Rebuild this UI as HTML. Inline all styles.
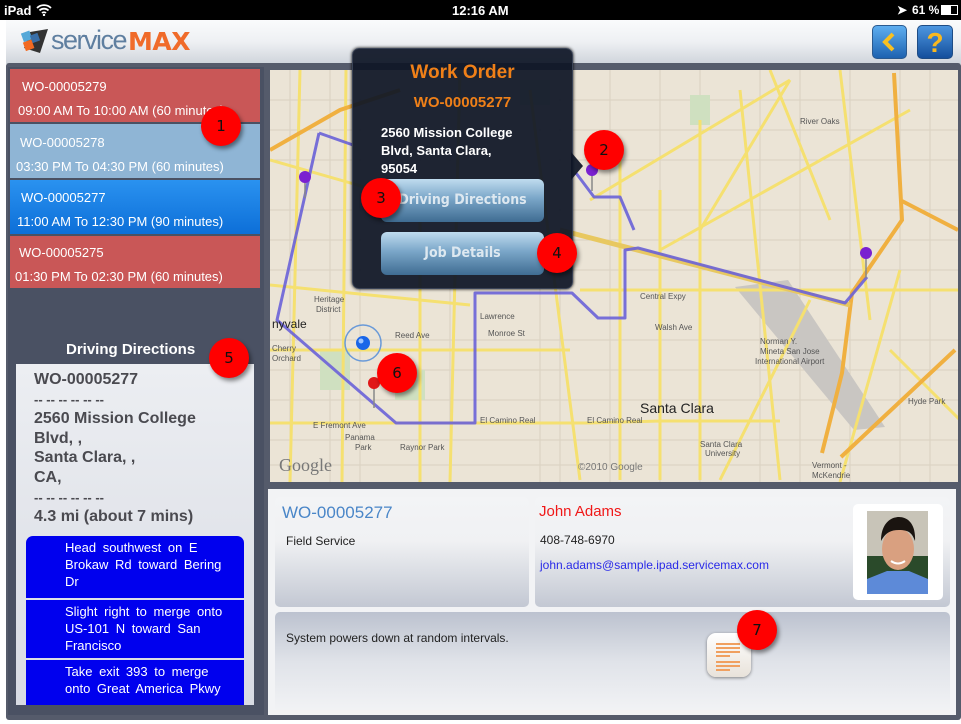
<!DOCTYPE html>
<html><head><meta charset="utf-8"><style>
*{margin:0;padding:0;box-sizing:border-box}
body{width:961px;height:724px;position:relative;overflow:hidden;background:#fff;font-family:"Liberation Sans",sans-serif}
.a{position:absolute}
.sb{left:0;top:0;width:961px;height:20px;background:#000;color:#fff;font-size:13px;font-weight:bold}
.hdr{left:6px;top:20px;width:955px;height:44px;background:linear-gradient(#fafbfc,#eef0f3 50%,#cfd4db)}
.frame{left:6px;top:63px;width:955px;height:657px;background:#555b6b;border-radius:3px}
.item{left:10px;width:250px;color:#fff;font-size:13px}
.item div{position:absolute;white-space:nowrap}
.rc{width:40px;height:40px;border-radius:50%;background:#f00;color:#111;font-size:15px;text-align:center;line-height:40px;box-shadow:2px 3px 4px rgba(0,0,0,.45);font-family:"DejaVu Sans",sans-serif}
.blue{left:26px;width:218px;background:#0000ee;color:#fff;font-size:13px;line-height:17px;padding:3px 14px 0 39px;word-spacing:3px}
.card{background:linear-gradient(#f3f4f6,#f0f1f3 40%,#c3c8d3);border-radius:5px}
.btn{left:381px;width:163px;height:43px;border-radius:6px;background:linear-gradient(#c0dcef,#7aa6c8 45%,#3f6c92);color:#dde8f0;font-weight:bold;font-size:14px;text-align:center;line-height:43px;font-family:"DejaVu Sans Condensed","DejaVu Sans",sans-serif}
</style></head><body>
<div class="a sb"><span class="a" style="left:4px;top:3px">iPad</span>
<svg class="a" style="left:36px;top:4px" width="16" height="12" viewBox="0 0 16 12"><path d="M1 4a10 10 0 0 1 14 0M3.5 6.5a6.5 6.5 0 0 1 9 0M6 9a3 3 0 0 1 4 0" stroke="#fff" stroke-width="1.8" fill="none"/><circle cx="8" cy="11" r="1.2" fill="#fff"/></svg>
<span class="a" style="left:452px;top:3px">12:16 AM</span>
<span class="a" style="left:897px;top:3px;font-size:12px">➤</span>
<span class="a" style="left:912px;top:3px;font-size:12px">61 %</span>
<div class="a" style="left:941px;top:5px;width:17px;height:10px;border:1px solid #fff"><div style="width:9px;height:8px;background:#fff"></div></div></div>
<div class="a hdr"></div>
<svg class="a" style="left:20px;top:27px" width="32" height="28" viewBox="0 0 32 28"><path d="M10 5l18-3-8 24-16-5z" fill="#333"/><rect x="2" y="5" width="9" height="9" transform="rotate(-20 6 9)" fill="#55a8d8"/><rect x="11" y="7" width="8" height="8" transform="rotate(-20 15 11)" fill="#3a6fa8"/><rect x="4" y="14" width="9" height="9" transform="rotate(-20 8 18)" fill="#f26a22"/></svg>
<div class="a" style="left:51px;top:25px;font-size:27px;color:#5f7fa0;letter-spacing:-1.5px">service</div>
<div class="a" style="left:128px;top:27px;font-size:25px;font-weight:bold;color:#f06b2a;letter-spacing:-0.5px;font-family:'DejaVu Sans',sans-serif">MAX</div>
<div class="a" style="left:872px;top:25px;width:35px;height:34px;border-radius:5px;background:linear-gradient(#5eaef0,#1d62b0);border:1px solid #2a5a90"><svg width="33" height="32"><path d="M20 8l-8 8 8 8" stroke="#f8c020" stroke-width="4" fill="none"/></svg></div>
<div class="a" style="left:917px;top:25px;width:36px;height:34px;border-radius:5px;background:linear-gradient(#4d96e0,#144f9c);border:1px solid #1e4c85;color:#f8b820;font-size:28px;font-weight:bold;text-align:center;line-height:33px">?</div>
<div class="a frame"></div>
<div class="a" style="left:8px;top:67px;width:256px;height:648px;background:#4a5163"></div>
<div class="a item" style="top:69px;height:53px;background:#c95757"><div style="left:12px;top:10px">WO-00005279</div><div style="left:8px;top:34px">09:00 AM To 10:00 AM (60 minutes)</div></div>
<div class="a item" style="top:124px;height:54px;background:#8fb5d5"><div style="left:10px;top:11px">WO-00005278</div><div style="left:6px;top:35px">03:30 PM To 04:30 PM (60 minutes)</div></div>
<div class="a item" style="top:180px;height:54px;background:linear-gradient(#2a92f0,#0d6fd8)"><div style="left:11px;top:10px">WO-00005277</div><div style="left:7px;top:34px">11:00 AM To 12:30 PM (90 minutes)</div></div>
<div class="a item" style="top:236px;height:52px;background:#c95757"><div style="left:9px;top:9px">WO-00005275</div><div style="left:5px;top:33px">01:30 PM To 02:30 PM (60 minutes)</div></div>
<div class="a" style="left:66px;top:341px;color:#fff;font-weight:bold;font-size:15px">Driving Directions</div>
<div class="a" style="left:16px;top:364px;width:238px;height:341px;background:linear-gradient(#eceef2,#d8dbe3)"></div>
<div class="a" style="left:34px;top:370px;color:#4a4a50;font-weight:bold;font-size:16px;line-height:19.6px">WO-00005277<br><span style="font-size:13px">-- -- -- -- -- --</span><br>2560 Mission College<br>Blvd, ,<br>Santa Clara, ,<br>CA,<br><span style="font-size:13px">-- -- -- -- -- --</span><br>4.3 mi (about 7 mins)</div>
<div class="a blue" style="top:536px;height:62px;border-radius:7px 7px 0 0">Head southwest on E Brokaw Rd toward Bering Dr</div>
<div class="a blue" style="top:600px;height:58px">Slight right to merge onto US-101 N toward San Francisco</div>
<div class="a blue" style="top:660px;height:45px">Take exit 393 to merge onto Great America Pkwy</div>
<!-- map -->
<svg class="a" style="left:270px;top:70px" width="688" height="412" viewBox="270 70 688 412" font-family="Liberation Sans" font-size="8" fill="#555">
<rect x="270" y="70" width="688" height="412" fill="#ebe4d6"/>
<g stroke="#d9d1c0" stroke-width="1" fill="none">
<path d="M290 70v412M330 70v412M360 70v412M420 70v412M450 70v412M540 70v412M560 70v412M610 70v412M660 70v412M700 70v412M760 70v412M800 70v412M850 70v412M900 70v412M930 70v412"/>
<path d="M270 100h688M270 130h688M270 160h688M270 210h688M270 240h688M270 270h688M270 340h688M270 370h688M270 400h688M270 440h688M270 465h688"/>
</g>
<g fill="#cfe0c0"><rect x="320" y="350" width="30" height="40"/><rect x="395" y="370" width="30" height="30"/><rect x="690" y="95" width="20" height="30"/><rect x="520" y="80" width="30" height="25"/></g>
<path d="M735 287l53-7 97 147-31 3z" fill="#c9c6c2"/>
<g stroke="#f5e070" stroke-width="3" fill="none">
<path d="M270 285l200 20M270 350h300M270 423h320l70-2h120M300 70l-10 412M346 70l-4 412M420 200v282M460 70l-10 412M530 90l50 390M620 140v340M660 190v290M700 120v360M740 90l40 390M580 290h380M270 160l140 40M590 200l200-120M660 250l250-140M700 230l90-150M770 70l60 150M840 70l30 250M810 300l-90 180M900 270l-60 212M890 350l70 70"/>
</g>
<g stroke="#f0b040" stroke-width="4" fill="none">
<path d="M270 150l70-40 60-20M894 73l8 147-50 73-10 80-20 80M841 457l114-107M900 200l58 30"/>
</g>
<path d="M560 230l290 75" stroke="#e8c860" stroke-width="5" fill="none"/>
<g stroke="#6a62d8" stroke-width="3" fill="none" stroke-linejoin="round" opacity="0.9">
<path d="M319 133l-42 187 119 103h79V293h97l26 25h27v-68l13-2 207 55 22-26"/>
<path d="M319 133l34 12M576 173l18 24h26l14 33"/>
</g>
<circle cx="363" cy="343" r="18" fill="none" stroke="#6a9ad8" stroke-width="1.5"/>
<circle cx="363" cy="343" r="7" fill="#1a66e8"/><circle cx="361" cy="341" r="2.5" fill="#9cc4ff"/>
<g stroke="#888" stroke-width="1.5"><path d="M305 180v18M592 173v18M866 256v22M374 386v22"/></g>
<circle cx="305" cy="177" r="6" fill="#7a20d0"/><circle cx="592" cy="170" r="6" fill="#7a20d0"/><circle cx="866" cy="253" r="6" fill="#7a20d0"/><circle cx="374" cy="383" r="6" fill="#e01818"/>
<text x="272" y="328" font-size="12" fill="#222">nyvale</text>
<text x="314" y="302">Heritage</text><text x="316" y="312">District</text>
<text x="272" y="351">Cherry</text><text x="272" y="361">Orchard</text>
<text x="480" y="319">Lawrence</text><text x="395" y="338">Reed Ave</text><text x="488" y="336">Monroe St</text>
<text x="640" y="413" font-size="14" fill="#222">Santa Clara</text>
<text x="313" y="428">E Fremont Ave</text><text x="345" y="440">Panama</text><text x="355" y="450">Park</text><text x="400" y="450">Raynor Park</text>
<text x="480" y="423">El Camino Real</text><text x="587" y="423">El Camino Real</text>
<text x="640" y="299">Central Expy</text><text x="655" y="330">Walsh Ave</text>
<text x="800" y="124">River Oaks</text><text x="760" y="344">Norman Y.</text><text x="760" y="354">Mineta San Jose</text><text x="755" y="364">International Airport</text>
<text x="908" y="404">Hyde Park</text><text x="700" y="447">Santa Clara</text><text x="705" y="456">University</text><text x="812" y="468">Vermont -</text><text x="812" y="478">McKendrie</text>
<text x="279" y="471" font-size="18" fill="#777" font-family="Liberation Serif">Google</text>
<text x="578" y="470" font-size="10" fill="#777">©2010 Google</text>
</svg>
<!-- popup -->
<div class="a" style="left:352px;top:48px;width:221px;height:241px;border-radius:7px;background:rgba(14,22,38,.93);box-shadow:0 0 3px #000;border:1px solid #3a4356"></div>
<div class="a" style="left:571px;top:152px;width:0;height:0;border-top:14px solid transparent;border-bottom:14px solid transparent;border-left:12px solid rgba(14,22,38,.93)"></div>
<div class="a" style="left:352px;top:62px;width:221px;text-align:center;color:#f08018;font-weight:bold;font-size:19px">Work Order</div>
<div class="a" style="left:352px;top:94px;width:221px;text-align:center;color:#f08018;font-weight:bold;font-size:15px">WO-00005277</div>
<div class="a" style="left:381px;top:124px;color:#fff;font-weight:bold;font-size:13px;line-height:18px">2560 Mission College<br>Blvd, Santa Clara,<br>95054</div>
<div class="a btn" style="top:179px">Driving Directions</div>
<div class="a btn" style="top:232px">Job Details</div>
<!-- details -->
<div class="a" style="left:268px;top:489px;width:688px;height:226px;background:#f2f3f5"></div>
<div class="a card" style="left:275px;top:497px;width:254px;height:110px"></div>
<div class="a card" style="left:535px;top:497px;width:415px;height:110px"></div>
<div class="a" style="left:275px;top:612px;width:675px;height:100px;border-radius:5px;background:linear-gradient(#bcc2cf,#e0e3e9 50%,#f2f3f5)"></div>
<div class="a" style="left:282px;top:503px;color:#4a86c8;font-size:17px">WO-00005277</div>
<div class="a" style="left:286px;top:534px;color:#222;font-size:12px">Field Service</div>
<div class="a" style="left:539px;top:503px;color:#f01818;font-size:15px">John Adams</div>
<div class="a" style="left:540px;top:533px;color:#222;font-size:12px">408-748-6970</div>
<div class="a" style="left:540px;top:558px;color:#2a2ae8;font-size:12px">john.adams@sample.ipad.servicemax.com</div>
<div class="a" style="left:853px;top:504px;width:90px;height:96px;background:#fff;border-radius:5px"></div>
<svg class="a" style="left:867px;top:511px" width="61" height="83" viewBox="0 0 61 83"><rect width="61" height="83" fill="#c8c4b8"/><rect y="45" width="61" height="25" fill="#2a4a2a"/><path d="M0 83V68l20-8h22l19 8v15z" fill="#5d8ad8"/><ellipse cx="31" cy="38" rx="16" ry="21" fill="#d9a080"/><path d="M14 30c0-18 10-24 18-24s17 6 16 24c-3-8-6-11-16-11s-14 4-18 11z" fill="#1a1410"/><path d="M24 50q7 5 14 0" stroke="#fff" stroke-width="2" fill="none"/></svg>
<div class="a" style="left:286px;top:631px;color:#222;font-size:12px">System powers down at random intervals.</div>
<div class="a" style="left:707px;top:633px;width:44px;height:44px;border-radius:9px;background:linear-gradient(#fff,#e8e2da);box-shadow:0 1px 3px rgba(0,0,0,.45)"><svg width="44" height="44"><g stroke="#f0a060" stroke-width="2"><path d="M9 11h24M9 15h24M9 19h24M9 23h14M9 29h24M9 33h24M9 37h14"/></g></svg></div>
<!-- red circles -->
<div class="a rc" style="left:201px;top:106px">1</div>
<div class="a rc" style="left:584px;top:130px">2</div>
<div class="a rc" style="left:361px;top:178px">3</div>
<div class="a rc" style="left:537px;top:233px">4</div>
<div class="a rc" style="left:209px;top:338px">5</div>
<div class="a rc" style="left:377px;top:353px">6</div>
<div class="a rc" style="left:737px;top:610px">7</div>
</body></html>
